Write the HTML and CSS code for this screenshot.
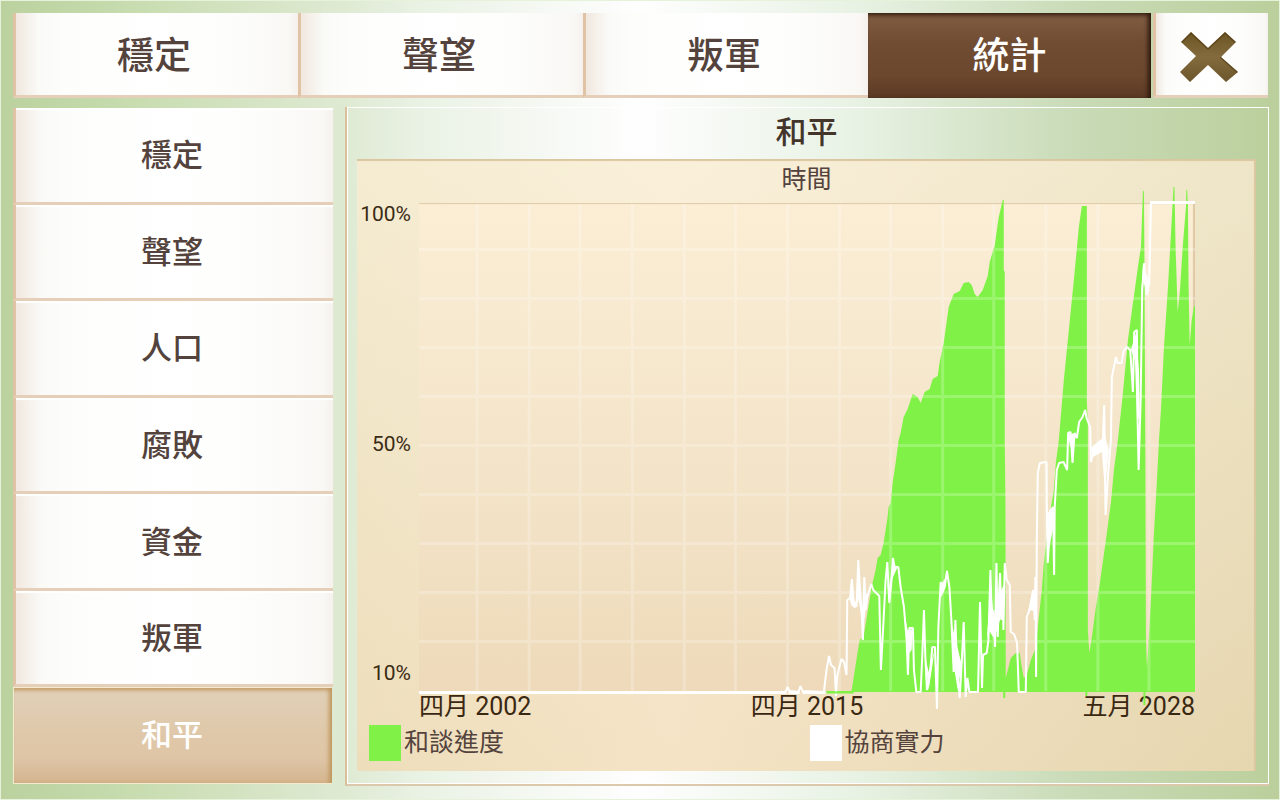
FILE: index.html
```html
<!DOCTYPE html>
<html lang="zh-Hant">
<head>
<meta charset="utf-8">
<meta name="viewport" content="width=device-width, initial-scale=1">
<title>統計 - 和平</title>
<link rel="stylesheet" href="styles.css">
</head>
<body>
<div class="screen">
  <nav class="tabs">
    <button class="tab" type="button">穩定</button>
    <button class="tab" type="button">聲望</button>
    <button class="tab" type="button">叛軍</button>
    <button class="tab tab-active" type="button" aria-current="page">統計</button>
    <button class="tab tab-close" type="button" aria-label="關閉">
      <svg class="close-icon" viewBox="0 0 58 52" aria-hidden="true">
        <defs>
          <linearGradient id="bronze" x1="0" y1="0" x2="0" y2="1">
            <stop offset="0" stop-color="#6a5323"/>
            <stop offset=".5" stop-color="#836b3d"/>
            <stop offset="1" stop-color="#6b552b"/>
          </linearGradient>
          <clipPath id="cross"><path d="M11 1 28 17 45 1 56 11 41 26 58 41 46 51 28 34 10 51 0 41 16 25 1 11Z"/></clipPath>
        </defs>
        <g clip-path="url(#cross)">
          <path fill="url(#bronze)" d="M0 0H58V52H0Z"/>
          <path class="close-shade" d="M1 11 11 1 28 17 45 1 56 11M41 26 58 41"/>
        </g>
      </svg>
    </button>
  </nav>
  <div class="content">
    <nav class="side">
      <button class="side-item" type="button">穩定</button>
      <button class="side-item" type="button">聲望</button>
      <button class="side-item" type="button">人口</button>
      <button class="side-item" type="button">腐敗</button>
      <button class="side-item" type="button">資金</button>
      <button class="side-item" type="button">叛軍</button>
      <button class="side-item side-active" type="button" aria-current="page">和平</button>
    </nav>
    <main class="panel">
      <h1 class="panel-title">和平</h1>
      <section class="chart">
        <h2 class="chart-title">時間</h2>
        <div class="y-axis"><span>100%</span><span>50%</span><span>10%</span></div>
        <div class="plot">
          <svg class="plot-svg" viewBox="419 203 775 489" preserveAspectRatio="none" role="img" aria-label="和談進度與協商實力">
            <path class="area" d="M826 691H851L853 678 859 640 863 637 871 587 875 570 877 558 880 555 883 543 887 517 888 507 890 503 892 483 895 463 898 440 900 433 903 417 907 409 910 400 912 394 917 397 920 403 924 392 929 389 932 379 937 376 939 362 943 343 948 307 953 294 959 291 963 283 968 282 971 285 974 294 977 297 982 290 987 276 989 262 994 245 998 217 1002 200H1003V270L1004 272V440L1004.7 503 1005 678 1010 658 1015 653H1019L1021 667 1023 678 1026 675 1030 660 1035 648 1037 627 1041 590 1043 563 1048 520 1053 490 1055 463 1058 440 1063 380 1068 330 1073 280 1078 227 1081 206H1086V403L1087 423V630L1088.5 653 1092 630 1095 607 1099 583 1105 540 1110 503 1113 470 1117 440 1122 393 1127 340 1132 303 1137 267 1140 247 1142 191H1143L1143.5 257 1144.5 473 1145 640 1146 667 1147 653 1150 600 1153 533 1156 480 1158 440 1160 410 1163 347 1167 287 1170 233 1172.5 187H1173.5L1174.6 247 1176.7 312 1179 290 1181.7 247 1185 207 1185.3 190H1186.2L1187 207 1187.5 280 1188.7 345 1190.7 320 1193 306H1194V692H826Z"/>
            <path class="grid" d="M477 204V691M529 204V691M580 204V691M632 204V691M684 204V691M735 204V691M787 204V691M839 204V691M890 204V691M942 204V691M993 204V691M1045 204V691M1097 204V691M1148 204V691M419 249.5H1194M419 298.5H1194M419 347.5H1194M419 396.5H1194M419 445.5H1194M419 494.5H1194M419 543.5H1194M419 592.5H1194M419 641.5H1194"/>
            <path class="line" d="M785 692 787 687 789 691 798 692 800 686 802 691 823.3 692 826 670 828.5 656 830.5 665 834 668 835.5 696 836.5 677 838.5 668 841 659 843.5 662 846 675 846.7 600 849.5 598 851.3 579 853.5 607 856 606 857.7 560 859.5 590 861 610 862.3 640 863.7 577 865.3 610 866.7 597 870.7 584 872.7 590 878.7 596 880.3 670 882.3 633 885 580 886.7 562 888.7 603 890.7 583 892.3 558 894 567 897.7 567 900 587 903.3 607 906 640 907.3 675 908.7 628 912.3 628 913.3 670 915.7 692H920L922 647 923.3 610 924.7 657 926.3 690 929.3 673 931.7 647 934.3 647 936.3 709 937.7 627 940 582 941.7 593 944 587 946.3 571 948.7 587 950.7 620 953 672 954.7 620 956.3 667 959 698 961.3 657 963 622 965 697 966.7 678 968.7 692H977.3L979.3 602 981.3 688 982.3 655 986 653 987.7 640 989.7 570 991.3 630 992.5 610 994.3 647 995.7 563 997 637 998 600 999.3 573 1000.7 620 1002 590 1002.7 630 1004 563 1006 580 1009 585 1010 632 1013.3 634 1016.3 643 1018 692H1025L1026 617 1029.3 608 1032.3 590 1034 620 1034.6 577 1035.3 677 1036 540 1037 473 1039 463 1045.7 462 1046 507 1047 563 1050 510 1052.3 507 1053.3 575 1053.9 507 1056 470 1058.3 463 1062.7 462 1066.3 470 1067.3 433 1069.7 432 1071.7 463 1073.7 433 1076 438 1078.3 422 1081.7 417 1084.3 410 1085.7 418 1089.3 427 1090 462 1093.3 450 1097.7 442 1101.7 448 1103.3 405 1104.7 515 1107.3 473 1110 440 1111 377 1115 357 1116.7 363 1120.7 363 1122.7 351 1126 347 1129.3 350 1132 392 1133.3 332 1136 330 1136.7 420 1137.7 470 1139.7 400 1141.3 290 1143.3 263 1145.7 295 1148.3 283 1150 203H1194"/>
            <path class="dense" d="M849 599 852 586 854 603 856 600 858 577 861 612 864 589 867 596 864 618 861 618 858 600 855 607 851 606ZM886 578 888 590 892 566 897 567 892 578 888 598ZM903 608 907 630 912 629 911 650 907 655ZM924 655 928 672 934 650 928 690ZM940 585 946 576 943 592 940 598ZM950 620 955 640 961 665 957 690 953 665ZM986 640 990 588 994 625 998 595 1004 583 1002 610 997 628 993 638 988 630ZM1026 617 1031 594 1035 597V612L1030 610ZM1046 515 1050 508 1054 510 1053 525 1048 550ZM1067 435 1074 433 1072 450 1069 445ZM1090 448 1104 436 1108 450 1104 490 1101 452 1092 457ZM1130 350 1135 333 1138 370 1139 418 1136 419 1134 360ZM1140 300 1142 264 1147 278 1149 282 1146 294 1142 280Z"/>
            <path class="flat" d="M419 692.5H786M788 692.5H799M802 692.5H825M1149 202.5H1194"/>
            <path class="area-edge" d="M826 692.5H853M1003.5 691V698M1085.5 691V696M1143.5 691V705"/>
          </svg>
        </div>
        <div class="x-axis"><span>四月 2002</span><span>四月 2015</span><span>五月 2028</span></div>
        <ul class="legend">
          <li class="legend-item"><span class="swatch swatch-green"></span>和談進度</li>
          <li class="legend-item"><span class="swatch swatch-white"></span>協商實力</li>
        </ul>
      </section>
    </main>
  </div>
</div>
</body>
</html>
```

FILE: styles.css
```css
* {
  box-sizing: border-box;
}

body {
  margin: 0;
  font-family: Roboto, "Noto Sans CJK TC", sans-serif;
  color: #54433d;
}

button {
  margin: 0;
  padding: 0;
  border: 0;
  font: inherit;
  color: inherit;
  cursor: pointer;
}

.screen {
  display: flex;
  flex-direction: column;
  gap: 9px;
  min-height: 100vh;
  padding: 12px 10px 13px 12px;
  border: 1px solid #e6f2da;
  background: linear-gradient(90deg, #bbd19e 0%, #c6dbad 9%, #dfead3 27%, #eaf2e5 33%, #fefefe 50%, #e8f2e4 67%, #c9dbb7 84%, #bbcf9c 100%);
}

.tabs {
  display: grid;
  grid-template-columns: repeat(4, 1fr) 115px;
  height: 85px;
  margin-right: 1px;
}

.tab,
.side-item {
  display: flex;
  align-items: center;
  justify-content: center;
  border-left: 3px solid #dfc3a4;
  border-bottom: 3px solid #e6cfb8;
  font-weight: 500;
  background: linear-gradient(90deg, #f1e8df 0, #fafaf7 8%, #fdfdfc 18%, #ffffff 50%, #fdfdfb 75%, #f9f8f5 97%, #f5f0ec 100%);
}

.tab {
  padding: 6px 6px 0 0;
  font-size: 37px;
  line-height: 48px;
}

.tab-active {
  border: 0;
  margin-right: 2px;
  padding: 3px 0 0;
  color: #fff;
  background: linear-gradient(#805d43 0%, #704c33 35%, #6b472e 75%, #5a3823 100%);
  box-shadow: inset -3px 2px 4px #2e180c;
}

.close-icon {
  width: 58px;
  height: 52px;
}

.close-shade {
  fill: none;
  stroke: #463008;
  stroke-width: 3;
  opacity: .5;
}

.content {
  flex: 1;
  display: grid;
  grid-template-columns: 320px 1fr;
  gap: 12px;
}

.side {
  display: grid;
  grid-auto-rows: 1fr;
  margin: 1px 0 2px;
}

.side-item {
  padding: 3px 5px 0 0;
  font-size: 31px;
  line-height: 40px;
  box-shadow: inset 0 2px 1px #fff;
}

.side-active {
  margin-right: 1px;
  padding: 1px 2px 0 0;
  border: 1px solid #f3ead0;
  border-right: 0;
  color: #fff;
  background: linear-gradient(#e1d0b8 0%, #dfc8a9 50%, #dec5a6 75%, #d4b48e 100%);
  box-shadow: inset -3px 2px 4px #bf965c;
}

.panel {
  display: flex;
  flex-direction: column;
  padding: 1px 13px 13px 10px;
  border-left: 2px solid #d9bf9c;
  border-bottom: 2px solid #dcc8aa;
  box-shadow: inset 0 0 0 1px #fff;
}

.panel-title {
  margin: 0;
  padding: 2px 0 4px;
  font-size: 31px;
  font-weight: 500;
  line-height: 45px;
  text-align: center;
  color: #44352b;
}

.chart {
  flex: 1;
  display: grid;
  grid-template-columns: 62px 1fr 61px;
  grid-template-rows: 44px 1fr 32px 36px;
  padding-bottom: 11px;
  background: linear-gradient(rgba(255, 252, 235, .35), rgba(230, 200, 150, .2)), linear-gradient(90deg, #efe3c4, #f8ead1 35%, #efe2c4 65%, #e6dab6);
  box-shadow: inset -2px 2px 1px #dbc79f;
}

.chart-title {
  grid-column: 1 / -1;
  margin: 0;
  padding-top: 4px;
  font-size: 25px;
  font-weight: 400;
  line-height: 34px;
  text-align: center;
}

.y-axis {
  display: flex;
  flex-direction: column;
  justify-content: space-between;
  padding: 0 8px 8px 0;
  font-size: 21px;
  line-height: 22px;
  text-align: right;
  color: #3a2b14;
}

.plot {
  position: relative;
  background: linear-gradient(#fbeed5, #f4e5ca 50%, #eedaba);
  box-shadow: inset -2px 1px 1px #dfc9a5;
}

.plot-svg {
  position: absolute;
  inset: 0;
  width: 100%;
  height: 100%;
  overflow: visible;
}

.area {
  fill: #80f247;
}

.area-edge {
  fill: none;
  stroke: #80f247;
  stroke-width: 2;
}

.grid {
  fill: none;
  stroke: #fff;
  stroke-opacity: .22;
  stroke-width: 3;
}

.line {
  fill: none;
  stroke: #fff;
  stroke-width: 2;
  stroke-linejoin: bevel;
}

.dense {
  fill: #fff;
}

.flat {
  fill: none;
  stroke: #fff;
  stroke-width: 3;
}

.x-axis {
  grid-column: 2;
  display: flex;
  justify-content: space-between;
  font-size: 25px;
  line-height: 30px;
  color: #3a2812;
}

.legend {
  grid-column: 1 / -1;
  display: grid;
  grid-template-columns: 1fr 1fr;
  margin: 0;
  padding: 0 6px 0 12px;
  list-style: none;
}

.legend-item {
  display: flex;
  align-items: center;
  gap: 3px;
  font-size: 25px;
  line-height: 38px;
}

.swatch {
  width: 32px;
  height: 36px;
}

.swatch-green {
  background: #80f247;
}

.swatch-white {
  background: #fff;
}
```
